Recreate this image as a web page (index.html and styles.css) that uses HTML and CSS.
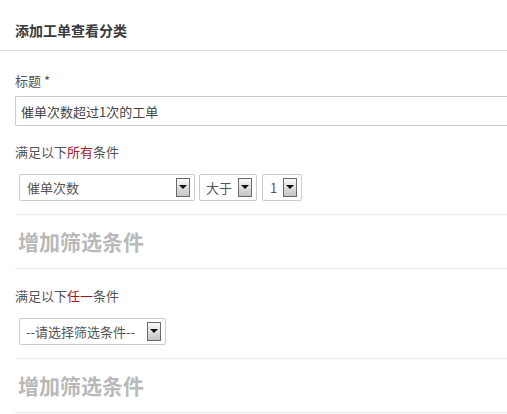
FILE: index.html
```html
<!DOCTYPE html>
<html lang="zh-CN">
<head>
  <meta charset="UTF-8">
  <meta name="viewport" content="width=device-width, initial-scale=1.0">
  <title>添加工单查看分类</title>
  <link rel="stylesheet" href="styles.css">
</head>
<body>
  <div class="header">
    <h1>添加工单查看分类</h1>
  </div>

  <div class="form">
    <div class="field">
      <label class="label" for="title">标题 *</label>
      <input id="title" class="text-input" type="text" value="催单次数超过1次的工单">
    </div>

    <div class="group">
      <div class="group-title">满足以下<span class="hl">所有</span>条件</div>
      <div class="cond-row">
        <div class="select sel-field"><span class="sel-text">催单次数</span><span class="arrow"></span></div>
        <div class="select sel-op"><span class="sel-text">大于</span><span class="arrow"></span></div>
        <div class="select sel-val"><span class="sel-text">1</span><span class="arrow"></span></div>
      </div>
      <div class="add-cond">增加筛选条件</div>
    </div>

    <div class="group">
      <div class="group-title">满足以下<span class="hl">任一</span>条件</div>
      <div class="cond-row">
        <div class="select sel-any"><span class="sel-text">--请选择筛选条件--</span><span class="arrow"></span></div>
      </div>
      <div class="add-cond">增加筛选条件</div>
    </div>
  </div>
</body>
</html>
```

FILE: styles.css
```css
* {
  box-sizing: border-box;
  margin: 0;
  padding: 0;
}
body {
  background-color: #fff;
  color: #444;
  font-family: "Noto Sans CJK SC", "Liberation Sans", sans-serif;
  font-size: 13px;
  overflow: hidden;
}
.header {
  height: 51px;
  padding: 21px 15px 0;
  border-bottom: 1px solid #dcdcdc;
}
h1 {
  font-size: 14px;
  line-height: 18px;
  font-weight: bold;
  color: #3a3a3a;
}
.form {
  padding-left: 15px;
}
.field {
  padding-top: 20px;
}
.label {
  display: block;
  line-height: 20px;
  color: #555;
  font-size: 13px;
}
/* the input runs on past the right edge of the window */
.text-input {
  display: block;
  width: 100%;
  height: 30px;
  margin-top: 5px;
  padding: 0 5px;
  border: 1px solid #ccc;
  border-right: none;
  border-radius: 2px 0 0 2px;
  font-family: inherit;
  font-size: 13px;
  color: #444;
}
.group {
  padding-top: 16px;
}
.group + .group {
  padding-top: 17px;
}
.group-title {
  line-height: 20px;
  color: #555;
}
.hl {
  color: #a3161b;
}
.cond-row {
  display: flex;
  margin-top: 12px;
  padding-left: 4px;
  gap: 4px;
}
.select {
  display: flex;
  align-items: center;
  justify-content: space-between;
  height: 27px;
  padding: 0 4px 0 7px;
  border: 1px solid #ccc;
  border-radius: 2px;
  background: #fff;
  color: #555;
}
.sel-field { width: 176px; }
.sel-op { width: 58px; padding-left: 6px; }
.sel-val { width: 40px; margin-left: 1px; padding-left: 7px; }
.sel-any { width: 147px; padding-left: 6px; }
.sel-text {
  line-height: 20px;
  white-space: nowrap;
}
.arrow {
  position: relative;
  flex: none;
  width: 14px;
  height: 19px;
  border: 1px solid #6a6a6a;
  background: linear-gradient(#fafafa, #c4c4c4);
}
.arrow::after {
  content: "";
  position: absolute;
  left: 2px;
  top: 6px;
  border-left: 4px solid transparent;
  border-right: 4px solid transparent;
  border-top: 4px solid #111;
}
.add-cond {
  margin-top: 13px;
  height: 55px;
  padding-left: 3px;
  border-top: 1px solid #ececec;
  border-bottom: 1px solid #e6e6e6;
  font-size: 21px;
  font-weight: bold;
  line-height: 52px;
  color: #b9b9b9;
}
```
